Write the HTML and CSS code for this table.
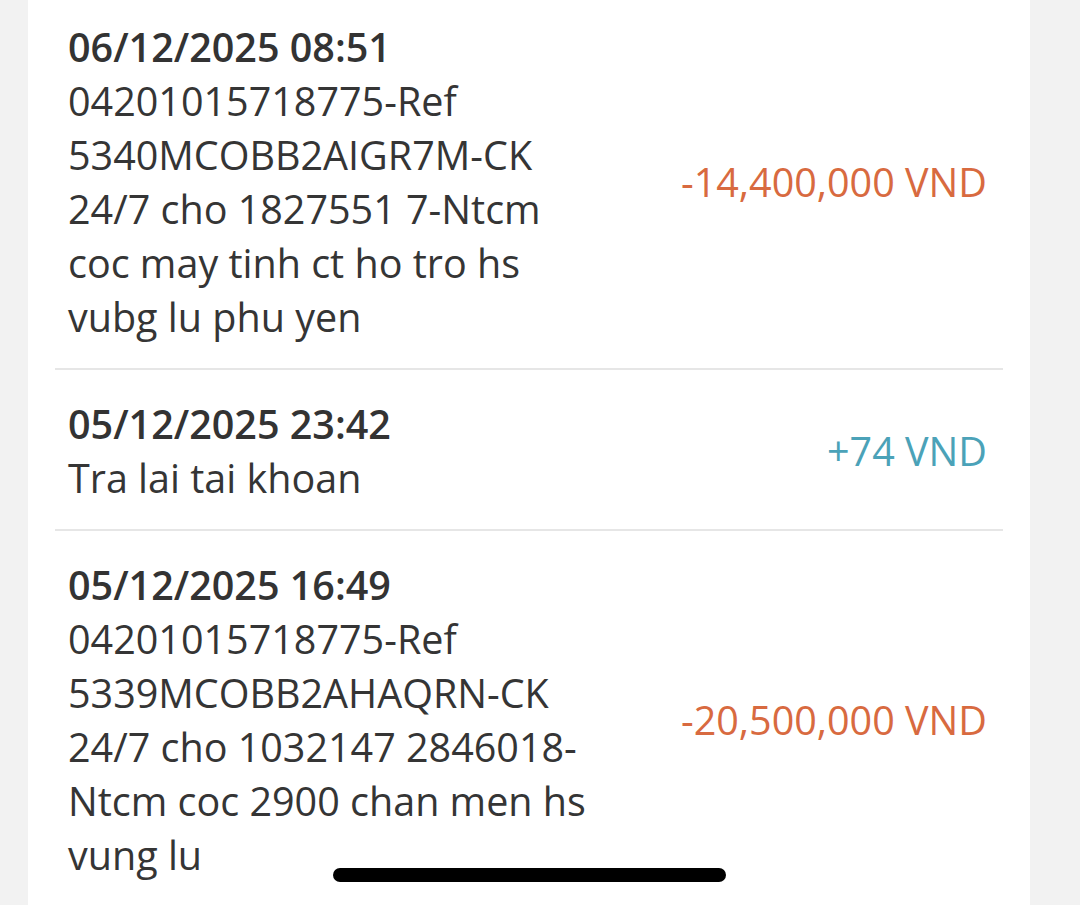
FILE: index.html
```html
<!DOCTYPE html>
<html>
<head>
<meta charset="utf-8">
<link rel="stylesheet" href="styles.css">
</head>
<body>
<div class="page">
  <div class="card">
    <div class="txn">
      <div class="info">
        <div class="date">06/12/2025 08:51</div>
        <div class="desc">04201015718775-Ref<br>5340MCOBB2AIGR7M-CK<br>24/7 cho 1827551 7-Ntcm<br>coc may tinh ct ho tro hs<br>vubg lu phu yen</div>
      </div>
      <div class="amount neg">-14,400,000 VND</div>
    </div>
    <div class="txn">
      <div class="info">
        <div class="date">05/12/2025 23:42</div>
        <div class="desc">Tra lai tai khoan</div>
      </div>
      <div class="amount pos">+74 VND</div>
    </div>
    <div class="txn last">
      <div class="info">
        <div class="date">05/12/2025 16:49</div>
        <div class="desc">04201015718775-Ref<br>5339MCOBB2AHAQRN-CK<br>24/7 cho 1032147 2846018-<br>Ntcm coc 2900 chan men hs<br>vung lu</div>
      </div>
      <div class="amount neg">-20,500,000 VND</div>
    </div>
  </div>
</div>
<div class="home-indicator"></div>
</body>
</html>
```
FILE: styles.css
```css
html, body {
  margin: 0;
  padding: 0;
  background: #f2f2f2;
  height: 905px;
  overflow: hidden;
  font-family: "Open Sans", "Noto Sans", sans-serif;
  color: #353535;
}
.page {
  padding-left: 28px;
  width: 1002px;
}
.card {
  background: #ffffff;
  padding: 20px 27px 0 27px;
  min-height: 905px;
  box-sizing: border-box;
}
.txn {
  display: flex;
  align-items: center;
  justify-content: space-between;
  padding: 0 16px 24px 13px;
  border-bottom: 2px solid #e6e6e6;
}
.txn + .txn {
  padding-top: 27px;
}
.txn.last {
  border-bottom: none;
}
.info {
  font-size: 39.5px;
  line-height: 54px;
}
.date {
  font-weight: 600;
  color: #333333;
}
.desc {
  font-weight: 400;
}
.amount {
  font-size: 39.5px;
  line-height: 54px;
  white-space: nowrap;
}
.neg { color: #d86a40; }
.pos { color: #4ba2b8; }
.home-indicator {
  position: absolute;
  left: 333px;
  top: 868px;
  width: 393px;
  height: 14px;
  border-radius: 7px;
  background: #000000;
}
```
